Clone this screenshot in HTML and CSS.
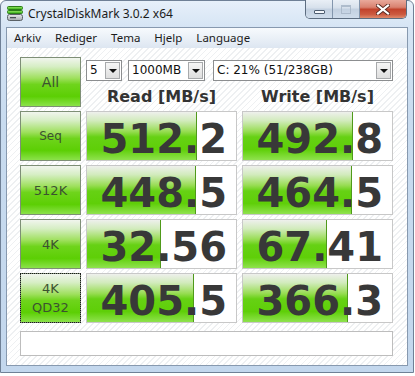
FILE: index.html
```html
<!DOCTYPE html>
<html>
<head>
<meta charset="utf-8">
<title>CrystalDiskMark 3.0.2 x64</title>
<link rel="stylesheet" href="styles.css">
</head>
<body>
<div class="window">
  <div class="titlebar">
    <svg class="app-icon" width="17" height="15" viewBox="0 0 17 15">
      <defs>
        <linearGradient id="g" x1="0" y1="0" x2="0" y2="1">
          <stop offset="0" stop-color="#9fe86a"/>
          <stop offset="1" stop-color="#2fae12"/>
        </linearGradient>
        <linearGradient id="d" x1="0" y1="0" x2="0" y2="1">
          <stop offset="0" stop-color="#e8eaec"/>
          <stop offset="1" stop-color="#a5aaaf"/>
        </linearGradient>
      </defs>
      <rect x="0.5" y="0.5" width="15" height="3" rx="1" fill="url(#g)" stroke="#2a7d17"/>
      <rect x="0.5" y="4.5" width="15" height="3" rx="1" fill="url(#g)" stroke="#2a7d17"/>
      <rect x="0.5" y="8.5" width="15" height="6" rx="2" fill="url(#d)" stroke="#5b6166"/>
      <rect x="3" y="11" width="6" height="1.3" fill="#4a5055"/>
    </svg>
    <span class="title">CrystalDiskMark 3.0.2 x64</span>
    <div class="caps">
      <div class="cap cap-min"><span class="glyph-min"></span></div>
      <div class="cap cap-max"><span class="glyph-max"></span></div>
      <div class="cap cap-close">
        <svg width="14" height="11" viewBox="0 0 14 11">
          <path d="M2 1.5 L12 9.5 M12 1.5 L2 9.5" stroke="#5a2a22" stroke-width="4" stroke-linecap="square" fill="none"/>
          <path d="M2 1.5 L12 9.5 M12 1.5 L2 9.5" stroke="#ffffff" stroke-width="2.2" stroke-linecap="square" fill="none"/>
        </svg>
      </div>
    </div>
  </div>
  <div class="frame-inner">
    <div class="menubar">
      <span class="menu-item">Arkiv</span>
      <span class="menu-item">Rediger</span>
      <span class="menu-item">Tema</span>
      <span class="menu-item">Hjelp</span>
      <span class="menu-item">Language</span>
    </div>
    <div class="client">
      <div class="grid">
        <div class="btn btn-all">All</div>
        <div class="top">
          <div class="controls">
            <div class="select s-count"><span class="sel-text">5</span><span class="sel-arrow"></span></div>
            <div class="select s-size"><span class="sel-text">1000MB</span><span class="sel-arrow"></span></div>
            <div class="select s-drive"><span class="sel-text">C: 21% (51/238GB)</span><span class="sel-arrow"></span></div>
          </div>
          <div class="heads">
            <div class="head">Read [MB/s]</div>
            <div class="head">Write [MB/s]</div>
          </div>
        </div>

        <div class="btn btn-seq">Seq</div>
        <div class="cell" style="--w:110px">512.2</div>
        <div class="cell" style="--w:110px">492.8</div>

        <div class="btn btn-512">512K</div>
        <div class="cell" style="--w:109px">448.5</div>
        <div class="cell" style="--w:109px">464.5</div>

        <div class="btn btn-4k">4K</div>
        <div class="cell" style="--w:74px">32.56</div>
        <div class="cell" style="--w:84px">67.41</div>

        <div class="btn btn-qd focus">4K<br>QD32</div>
        <div class="cell" style="--w:107px">405.5</div>
        <div class="cell" style="--w:105px">366.3</div>

        <div class="comment"></div>
      </div>
    </div>
  </div>
</div>
</body>
</html>
```

FILE: styles.css
```css
* { box-sizing: border-box; }

body {
  margin: 0;
  width: 415px;
  height: 376px;
  overflow: hidden;
  background: #ffffff;
}

.window {
  width: 414px;
  height: 373px;
  border: 1px solid #6f8096;
  border-radius: 6px 6px 0 0;
  background: linear-gradient(to bottom, #e7f0fa 0px, #d5e4f4 27px, #c8dbef 120px, #c3d7ed 100%);
  padding: 0 5px 6px;
  display: flex;
  flex-direction: column;
}

.titlebar {
  height: 26px;
  display: flex;
  align-items: flex-start;
}

.app-icon {
  margin: 5px 0 0 1px;
  flex: none;
}

.title {
  margin: 4px 0 0 4px;
  font-family: "Noto Sans", "DejaVu Sans", sans-serif;
  font-size: 12px;
  line-height: 17px;
  color: #1b1b1b;
}

.caps {
  margin: -1px 1px 0 auto;
  display: flex;
  height: 19px;
  border: 1px solid #5d6d80;
  border-top: none;
  border-radius: 0 0 5px 5px;
  overflow: hidden;
}

.cap {
  height: 18px;
  display: flex;
  align-items: center;
  justify-content: center;
}

.cap-min, .cap-max {
  background: linear-gradient(to bottom, #e9eff6 0%, #d6e0eb 45%, #c2d0e0 50%, #cfdceb 100%);
  border-right: 1px solid #8396ad;
}

.cap-min { width: 27px; }
.cap-max { width: 27px; }

.cap-close {
  width: 46px;
  background: linear-gradient(to bottom, #e9a99c 0%, #d98270 40%, #c2432d 52%, #cc5a40 80%, #e08a6c 100%);
}

.glyph-min {
  width: 11px;
  height: 4px;
  margin-top: 5px;
  background: #f4f7fb;
  border: 1px solid #4e5d70;
  border-radius: 1px;
}

.glyph-max {
  width: 10px;
  height: 9px;
  border: 1px solid #a9b7c8;
  border-top-width: 2px;
  background: transparent;
  opacity: 0.9;
}

.frame-inner {
  flex: 1;
  display: flex;
  flex-direction: column;
  border: 1px solid #8799af;
}

.menubar {
  height: 20px;
  flex: none;
  display: flex;
  align-items: center;
  padding-left: 6px;
  background: linear-gradient(to bottom, #f7fafd 0%, #eaf0f7 50%, #dde6f1 100%);
  font-family: "Noto Sans", "DejaVu Sans", sans-serif;
  font-size: 11.5px;
  color: #1b1b1b;
}

.menu-item {
  padding: 0 7px 0 1px;
  margin-right: 6px;
  line-height: 18px;
}

.client {
  flex: 1;
  background: repeating-linear-gradient(135deg, #ffffff 0px, #ffffff 3px, #eef0f2 3px, #eef0f2 4.2px);
  padding: 9px 0 0 13px;
}

.grid {
  display: grid;
  grid-template-columns: 61px 151px 151px;
  grid-template-rows: 50px 50px 50px 50px 50px 29px;
  column-gap: 5px;
  row-gap: 4px;
}

.btn {
  border: 1px solid #7e8f76;
  background: linear-gradient(to bottom, #f1f5ee 0%, #d6eec4 18%, #9fe05e 42%, #6fd41c 55%, #5ccf04 80%, #8be24a 100%);
  display: flex;
  align-items: center;
  justify-content: center;
  text-align: center;
  font-family: "DejaVu Sans", sans-serif;
  font-size: 13px;
  line-height: 19px;
  color: #3c5230;
}

.btn-all { font-size: 14px; }
.btn-seq { font-size: 12px; }

.focus {
  outline: 1px dotted #1a1a1a;
  outline-offset: -1px;
}

.top {
  grid-column: 2 / 4;
  display: flex;
  flex-direction: column;
}

.controls {
  display: flex;
  height: 21px;
  margin-top: 3px;
}

.select {
  height: 21px;
  border: 1px solid #8c8e90;
  background: #ffffff;
  display: flex;
  align-items: center;
  padding: 1px;
}

.s-count { width: 36px; }
.s-size { width: 77px; margin-left: 6px; }
.s-drive { width: 180px; margin-left: 8px; }

.sel-text {
  flex: 1;
  padding-left: 2px;
  font-family: "DejaVu Sans", sans-serif;
  font-size: 12px;
  line-height: 17px;
  color: #111111;
  white-space: nowrap;
  overflow: hidden;
}

.sel-arrow {
  width: 15px;
  height: 17px;
  flex: none;
  border: 1px solid #a7a9ab;
  background: linear-gradient(to bottom, #f6f6f6, #dedede);
  display: flex;
  align-items: center;
  justify-content: center;
}

.sel-arrow::after {
  content: "";
  width: 0;
  height: 0;
  border-left: 4px solid transparent;
  border-right: 4px solid transparent;
  border-top: 4px solid #111111;
  margin-top: 1px;
}

.heads {
  display: grid;
  grid-template-columns: 151px 151px;
  column-gap: 5px;
  margin-top: 6px;
}

.head {
  text-align: center;
  font-family: "DejaVu Sans", sans-serif;
  font-weight: bold;
  font-size: 16px;
  line-height: 20px;
  color: #333333;
}

.cell {
  border: 1px solid #c8c8c8;
  background:
    linear-gradient(to left, #4f9a1a 0px, #4f9a1a 1px, transparent 1px) no-repeat,
    linear-gradient(to bottom, #eef0ec 0%, #d2ebbd 18%, #99dd55 40%, #66d114 52%, #5fcf08 78%, #8fe24e 100%) no-repeat,
    #ffffff;
  background-size: var(--w) 100%, var(--w) 100%, auto;
  text-align: right;
  padding: 6px 9px 0 0;
  font-family: "DejaVu Sans", sans-serif;
  font-weight: bold;
  font-size: 40px;
  line-height: 42px;
  color: #383838;
}

.comment {
  grid-column: 1 / 4;
  margin-top: 4px;
  border: 1px solid #bdbdbd;
  background: #ffffff;
}
```
